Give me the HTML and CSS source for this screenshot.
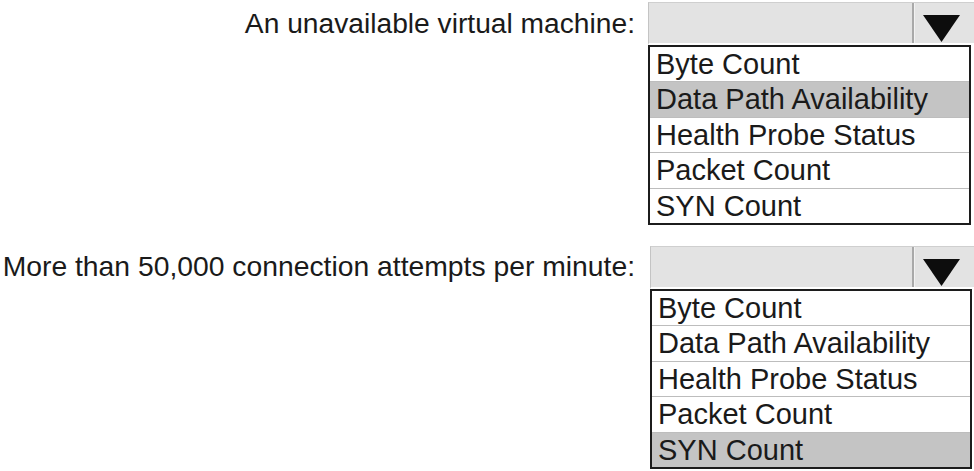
FILE: index.html
```html
<!DOCTYPE html>
<html lang="en">
<head>
<meta charset="utf-8">
<title>Dropdown answers</title>
<link rel="stylesheet" href="styles.css">
</head>
<body>
<div class="form">
  <div class="field field-first">
    <div class="label">An unavailable virtual machine:</div>
    <div class="dropdown">
      <div class="select">
        <span class="value"></span>
        <span class="arrow"><svg width="37" height="27" viewBox="0 0 37 27"><polygon points="0,0 37,0 18.5,27" fill="#0d0d0d"/></svg></span>
      </div>
      <ul class="options">
        <li>Byte Count</li>
        <li class="selected">Data Path Availability</li>
        <li>Health Probe Status</li>
        <li>Packet Count</li>
        <li>SYN Count</li>
      </ul>
    </div>
  </div>
  <div class="field field-second">
    <div class="label">More than 50,000 connection attempts per minute:</div>
    <div class="dropdown">
      <div class="select">
        <span class="value"></span>
        <span class="arrow"><svg width="37" height="27" viewBox="0 0 37 27"><polygon points="0,0 37,0 18.5,27" fill="#0d0d0d"/></svg></span>
      </div>
      <ul class="options">
        <li>Byte Count</li>
        <li>Data Path Availability</li>
        <li>Health Probe Status</li>
        <li>Packet Count</li>
        <li class="selected">SYN Count</li>
      </ul>
    </div>
  </div>
</div>
</body>
</html>
```
FILE: styles.css
```css
html, body {
  margin: 0;
  padding: 0;
  background: #ffffff;
}
body {
  width: 974px;
  height: 471px;
  overflow: hidden;
  font-family: "Liberation Sans", Arial, sans-serif;
  color: #1a1a1a;
}
.form {
  display: flex;
  flex-direction: column;
}
.field {
  display: grid;
  align-items: start;
}
.field-first {
  grid-template-columns: 648px 326px;
  padding-top: 2px;
}
.field-second {
  grid-template-columns: 650px 324px;
  margin-top: 21px;
}
.label {
  height: 42px;
  display: flex;
  align-items: center;
  justify-content: flex-end;
  padding-right: 13px;
  font-size: 28.2px;
  white-space: nowrap;
}
.field-second .label {
  height: 41px;
  padding-right: 15px;
  font-size: 28.3px;
}
.dropdown {
  display: flex;
  flex-direction: column;
}
.select {
  height: 43px;
  box-sizing: border-box;
  display: flex;
  background: #e3e3e3;
  border-top: 1px solid #cfcfcf;
  border-left: 1px solid #c4c4c4;
  border-bottom: 2px solid #ffffff;
}
.value {
  flex: 1;
}
.arrow {
  width: 62px;
  box-sizing: border-box;
  border-left: 2px solid #a9a9a9;
  box-shadow: inset 1px 0 0 #f2f2f2;
  display: flex;
  align-items: flex-start;
  padding-left: 9px;
  padding-top: 12px;
}
.options {
  list-style: none;
  margin: 0;
  padding: 0;
  width: 323px;
  box-sizing: border-box;
  border: 2px solid #1c1c1c;
  background: #ffffff;
}
.field-second .options {
  width: 322px;
}
.options li {
  height: 34.4px;
  line-height: 34.4px;
  padding-left: 6px;
  font-size: 29px;
  white-space: nowrap;
  border-bottom: 1px solid #bdbdbd;
}
.options li:last-child {
  border-bottom: none;
}
.options li.selected {
  background: #c4c4c4;
}
```
